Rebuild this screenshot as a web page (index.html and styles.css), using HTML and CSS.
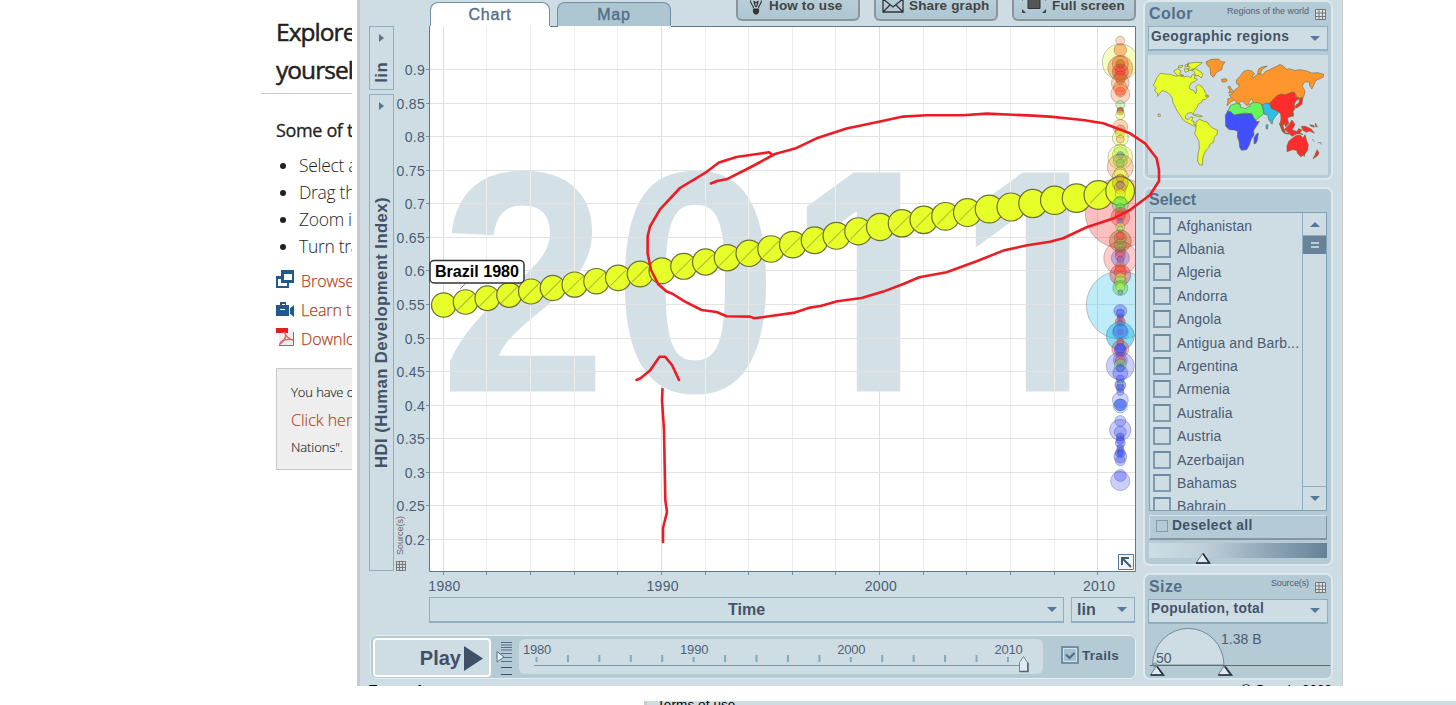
FILE: index.html
```html
<!DOCTYPE html>
<html lang="en">
<head>
<meta charset="utf-8">
<title>Explore the data yourself</title>
<link rel="stylesheet" href="styles.css">
</head>
<body>
<div class="page">
  <div class="top">
    <aside class="article">
      <h1>Explore the data<br>yourself</h1>
      <h2>Some of the things</h2>
      <ul class="tips">
        <li>Select a country</li>
        <li>Drag the slider</li>
        <li>Zoom in to see</li>
        <li>Turn trails on</li>
      </ul>
      <div class="links">
        <a><svg width="19" height="20" viewBox="0 0 19 20"><path fill="#22598c" d="M5 -1h13v13H5zM0 5h13v12H0z"/><path fill="#fff" d="M8 3h8v6H8z"/><path fill="#fff" d="M2 8h3v4h6v3H2z"/></svg>Browse data</a>
        <a><svg width="19" height="20" viewBox="0 0 19 20"><path fill="#22598c" d="M0 5h4V2h6v3h3v4l5-4v12l-5-4v3H0z"/><path fill="#fff" d="M6 4h3v1H6zM4 9h5v1H4zM13 7h1v7h-1z"/></svg>Learn to use</a>
        <a><svg width="19" height="20" viewBox="0 0 19 20"><path fill="#eee" d="M3 0h14v16H3z"/><path fill="none" stroke="#777" d="M17.500 3v13.500H3"/><path fill="#e02020" d="M0-1h12v5H0z"/><path fill="none" stroke="#e0686c" stroke-width="1.500" d="M8 3c3 3 2 7-4 12 1-4 8-6 13-4-5-1-7-4-9-8"/></svg>Download it</a>
      </div>
      <div class="note">
        <p>You have chosen</p>
        <p class="note-link">Click here to</p>
        <p>Nations".</p>
      </div>
    </aside>

    <main class="app">
      <div class="main">
        <div class="tabbar">
          <div class="tab tab-on">Chart</div>
          <div class="tab">Map</div>
          <div class="tools">
            <div class="tool t1"><svg width="14" height="18" viewBox="0 0 14 18" fill="none" stroke="#333" stroke-width="1.1"><path d="M4.500 11C4 8 1.500 7 1.500 3.500M12.500 3.500C12.500 7 9.500 8 9.500 11M5 5l1.500 5M9 5l-1.500 5M4.500 4l2.500 2 2.500-2"/><path fill="#333" d="M4.500 12h5v3l-1.500 2h-2l-1.500-2z"/></svg>How to use</div>
            <div class="tool t2"><svg width="22" height="15" viewBox="0 0 22 15" fill="none" stroke="#333" stroke-width="1.3"><path d="M1 1h20v13H1zM1 1l10 8 10-8M1 14l7-7M21 14l-7-7"/></svg>Share graph</div>
            <div class="tool t3"><svg width="24" height="17" viewBox="0 0 24 17"><path fill="#555" stroke="#333" d="M6 2.500h12v9H6z"/><path fill="#444" d="M0 0h4L0 4zM24 0h-4l4 4zM0 16h4l-4-4zM24 16h-4l4-4z"/></svg>Full screen</div>
          </div>
        </div>
        <div class="chart-row">
          <div class="axis-picks">
            <div class="vpick vpick-s"><svg width="5" height="8"><path d="M0 0l5 4-5 4z"/></svg><span>lin</span></div>
            <div class="vpick vpick-l"><svg width="5" height="8"><path d="M0 0l5 4-5 4z"/></svg><span>HDI (Human Development Index)</span></div>
          </div>
          <svg id="chart" class="chart" width="742" height="571" viewBox="394 26 742 571"></svg>
        </div>
        <div class="xpicks">
          <div class="pick xtime"><span>Time</span><i class="caret"></i></div>
          <div class="pick xlin"><span>lin</span><i class="caret"></i></div>
        </div>
        <div class="playbar">
          <div class="play"><span>Play</span><svg width="19" height="25"><path fill="#3f5068" d="M0 0l19 12.500L0 25z"/></svg></div>
          <svg class="speed" width="17" height="36" viewBox="496 641 17 36"><path stroke="#56708a" stroke-width="1.1" d="M501 642.500h11M501 645h11M501 647.500h11M501 650h11M501 653.500h11M501 657.500h11M501 661.500h11"/><path stroke="#3f5068" d="M501 667.500h11M501 674.500h11"/><path fill="#e8eff3" stroke="#56708a" d="M497 651.500l7 5.500-7 5z"/></svg>
          <svg id="timeline" class="timeline" width="524" height="35" viewBox="519 639 524 35"></svg>
          <div class="trails"><svg width="18" height="18"><path fill="#a5c1cf" stroke="#5f7e97" stroke-width="1.500" d="M1 1h16v16H1z"/><path fill="none" stroke="#d4e2e9" d="M2.500 2.500h13v13h-13z"/><path fill="none" stroke="#4d6b85" stroke-width="2" d="M5 8.500l3.500 3.500L13.500 7"/></svg>Trails</div>
        </div>
      </div>

      <div class="side">
        <section class="panel p-color">
          <header><b>Color</b><small>Regions of the world</small><svg class="grid-ic" width="11" height="11"><path d="M.5.5h10v10H.5zM4 .5v10M7.500.5v10M.5 4h10M.5 7.500h10"/></svg></header>
          <div class="pick wide"><span>Geographic regions</span><i class="caret"></i></div>
          <div class="mapbox"><svg width="180" height="120" viewBox="36 165 540 360" stroke="#6b6a3c" stroke-width="1.800" stroke-linejoin="round">
            <g fill="#e6ff29">
              <path transform="translate(15 0) scale(.93 1)" d="M52 232l10-12 18 2 14 1 19 6 8-3 18 5 10-3 12 5 5-10 8 2-2 10 10 2-8 8-10 2-8 12 2 8 14 5 4 10 4-10-3-12 8-6 10 4 8 10 4 10 9 12-8 8-10 2-1 6-12 6-5 12-8 8-4 12-4-6-12 1-8 8 0 9 8 3 8-8 8 1-5 10 8 3 0 9 10 2-10 3-12-7-16-7-10-9-8-12-8-10-6-12-7-12-3-16-9-12-12-7-10-3-7 5-10 12 2-8-8-5-3-8 6-3-10-9z"/>
              <path d="M113 213l12-7 10 7-4 9 12 4-18 2zM127 198l14-2-4 6-9 2zM147 195l12-4-3 8-9 2zM156 190l22-3 21 1-10 8-13 9-8 7-13-2 8-8-9-4zM166 207l14 0 14 8 7 9-6 10-8-8-8 2-4-12zM145 207l11-2 2 8-10 4zM173 345l12-1 14 5-10 2zM66 342l7 1 0 6-6 0zM208 286l9 0 0 5-8-1z"/>
              <path d="M180 366l10-8 12 5 12 3 6 9 10 9 15 7-2 12-8 9-2 14-11 7-4 10-10 10-4 10-4 13 0 10 0 9-9 0-6-11 1-20 4-20-1-20-6-11-7-12 4-15z"/>
            </g>
            <g fill="#ff962d">
              <path d="M211 185l15-7 22-1 8 8 11 1-8 12-1 10-16 9-10 15-8-8-2-19-10-12zM256 238l12-2 6 4-5 6-10 0zM365 222l2-14 11-7 16-3-15 10-7 14zM275 262l6-4 5 8 7 9-15 5 4-10z"/>
              <path transform="translate(26 0) scale(.9 1)" d="M277 309l0-12 12-4-7-8 12-5 8-12 9-4 5-10-9-2-2-12 12-10 12-15 14-5 14 3 10 9-8 5 2 7 10-8 14-4 10 1 8-9 10-4 20-8 19-9 14 8 5 7 12-2 15 5 22-2 20 4 17 6 20-1 20 5-2 8-15 7-10 4-7 15-6 10-8-12 2-9-18 0-8 12 10 15-5 17-10 12-14-3 0-14-18-3-20 5-18-2-9 5-12 10-6 15-10-4-15 7-10-6-16-1-10-3-6-13-9 12 2 8-10 1-8-9-7-4-8 5 1 8-9-7-9-9-9 4-8 7-8 6z"/>
            </g>
            <path fill="#65f560" d="M275 333l9-17 18-6 12 4-2 7 16 5 9-6 7-2 0-8 16-3 13 3 5 8 4 13 0 12-9 7-13 10-8-7-6-11-17-3-20 4-6 6-14-8z"/>
            <path fill="#4050ff" d="M268 346l7-13 9 2 10 11 10-3 20-2 23 0 6 12 10 12 7-1-9 15-8 12 1 14-8 12-7 20-7 12-16 2-5-10-2-17-5-14 1-16-10-4-15-1-11-10zM354 431l0-18 8-12 5-1-2 17-5 13z"/>
            <path fill="#2dbde8" d="M379 314l12-5 10 3 12 14 18 3-6 12-7 9-7 10-3 13-10-14-3-14-10-2zM390 375l6-1-1 13-5-1z"/>
            <path fill="#ff2c2c" d="M401 309l10-10 12-12 12-5 12 2 10-3 9-4 10 0 3 13 12 4-10 7-6 11 2 13-7 12 1 10-10 4-7 3 4 16-9 10-4-10-5 10 7 17-7-3-8-20 3-18-1-14-7-7-12-6-10-5zM479 316l10-8 4-14 7-2-2 20-12 10-7 2zM430 369l12 12 6 17 12 4-10 0-10-6zM446 388l14-16 8-12 9 14-9 15 15 6 5-9 10 4-7 9 10 4-18-2-15 8zM465 330l8 10-2 10-6-6zM496 379l12 0 18 8 9 13-14-7-10 4-10-6zM522 374l12 3 0 5-10-4zM538 369l6 12-6-2zM453 439l5-15 12-10 12-8 12 0 7 8 6-10 5 18 5 13-3 17-8 11-12 7-10-10-2-9-12-2-17 6zM501 457l5-1-1 14zM543 449l6 9-5 10-13 8 6-11zM528 417l7 8M545 428l10 0M554 427l3 7"/>
          </svg></div>
        </section>
        <section class="panel p-select">
          <header><b>Select</b></header>
          <div class="list">
            <div class="items">
              <label><i></i>Afghanistan</label><label><i></i>Albania</label><label><i></i>Algeria</label><label><i></i>Andorra</label><label><i></i>Angola</label><label><i></i>Antigua and Barb...</label><label><i></i>Argentina</label><label><i></i>Armenia</label><label><i></i>Australia</label><label><i></i>Austria</label><label><i></i>Azerbaijan</label><label><i></i>Bahamas</label><label><i></i>Bahrain</label>
            </div>
            <div class="scroll"><div class="sb"><i class="up"></i></div><div class="thumb"><i></i></div><div class="sb last"><i class="caret"></i></div></div>
          </div>
          <div class="desel"><i></i>Deselect all</div>
          <div class="fade"><svg width="16" height="12"><path fill="#dfe9ee" stroke="#6a7c8c" d="M1 11L7.500 1.500 14 11z"/><path fill="none" stroke="#1f2a3a" stroke-width="1.500" d="M8 1.500L14.500 11H1"/></svg></div>
        </section>
        <section class="panel p-size">
          <header><b>Size</b><small>Source(s)</small><svg class="grid-ic" width="11" height="11"><path d="M.5.5h10v10H.5zM4 .5v10M7.500.5v10M.5 4h10M.5 7.500h10"/></svg></header>
          <div class="pick wide"><span>Population, total</span><i class="caret"></i></div>
          <svg class="sizer" width="182" height="54" viewBox="1148 623 182 54"><path fill="#cedde4" stroke="#6f8ca3" d="M1152.500 664a35.700 36.500 0 0 1 71.500 0z"/><path stroke="#5f6a68" d="M1150 664.500h180"/><circle cx="1155" cy="664" r="2" fill="none" stroke="#6f8ca3"/><text x="1156" y="662">50</text><text x="1221" y="643">1.38 B</text><g fill="#dfe9ee" stroke="#6a7c8c"><path d="M1150.500 674l6-9 6 9z"/><path d="M1218 674l6-9 6 9z"/></g><path fill="none" stroke="#1f2a3a" stroke-width="1.500" d="M1157 665.500l6.500 8.500h-13M1225 665.500l6.500 8.500h-13"/></svg>
        </section>
      </div>
      <footer class="foot"><span>Terms of use</span><span>© Google 2009</span></footer>
    </main>
  </div>
  <div class="strip"><span>Terms of use</span></div>
  <svg class="ink" width="1456" height="705">
    <path d="M711 183.500L717 181 726.500 179.300 750 167.500 774 154.500M772.500 155L769 152.300 736.500 157 719 162.500 706 172.300 680 188 660 209.300 650 226.500 647.600 236.600V253.300L651 270 658.300 284.300 666.600 291.600 672 293.500 685 301.600 701.600 310 716.600 312 726.600 316.300 750 316.600 754.300 318.300 795 312.600 810 307.600 820.600 306 837.300 301.300 861.600 298 883.300 291.600 903.300 284 919.300 277.300 946.600 272.300 976.600 261.300 1003.300 250.600 1026 245.500 1050 241.700 1063.300 238.300 1086.600 227.300 1113.300 218.600 1130 210 1150 195 1159 181V170L1156.600 158.300 1145 143.300 1130 133.300 1103.300 123.300 1083 120 1050 116.600 1033 115.600 987 113.600 963 115.300H926.600L903 116.600 880 121.600 846.600 128.600 816.600 138.300 795 148.600 774 154.300"/>
    <path d="M636.500 380L640.500 378.300 650 370.600 659.500 356.700H665L672 365 679 380M662.500 389L662 400 664 430 665.300 500 667 512 663 528V542"/>
  </svg>
</div>
<script src="chart.js"></script>
</body>
</html>
```
FILE: styles.css
```css
* { box-sizing: border-box; }
body { margin: 0; background: #fff; font-family: "Liberation Sans", Arial, sans-serif; }
.page { position: relative; width: 1456px; height: 705px; overflow: hidden; }
.top { display: flex; height: 686px; gap: 5px; }

.article { width: 352px; height: 686px; overflow: hidden; padding-left: 276px; white-space: nowrap; font-family: "Open Sans", "Noto Sans", sans-serif; color: #231f20; }
.article h1 { margin: 0 0 0 -15px; padding: 13px 0 4px 15px; height: 94px; border-bottom: 1px solid #c8c8c8; font-size: 24.500px; line-height: 38px; font-weight: 400; letter-spacing: -.95px; -webkit-text-stroke: .5px #231f20; }
.article h2 { margin: 23px 0 0; font-size: 18px; line-height: 26px; font-weight: 400; letter-spacing: -.35px; -webkit-text-stroke: .3px #231f20; }
.tips { margin: 9px 0 0; padding: 0 0 0 23px; font-size: 17.500px; line-height: 27px; font-weight: 300; letter-spacing: -.3px; }
.links { display: grid; grid-auto-rows: 29px; margin-top: 6px; }
.links svg { overflow: visible; }
.links a { display: flex; align-items: center; gap: 6px; font-size: 16px; letter-spacing: -.05px; color: #b5451b; font-weight: 300; -webkit-text-stroke: .25px #b5451b; }
.note { width: 300px; height: 102px; margin-top: 15px; padding: 10px 14px; background: #eee; border: 1px solid #c8c8c8; font-size: 13px; line-height: 27.500px; letter-spacing: -.1px; }
.note p { margin: 0; font-weight: 300; -webkit-text-stroke: .15px currentColor; }
.note .note-link { font-size: 16px; color: #b5451b; letter-spacing: 0; }

.app { width: 986px; height: 686px; overflow: hidden; display: grid; grid-template-columns: 776px 190px; grid-template-rows: 682px 20px; column-gap: 7px; background: #cedde4; border-left: 3px solid #c9caca; border-right: 1px solid #c9caca; }
.tabbar { display: flex; height: 26px; padding-left: 70px; align-items: flex-start; }
.tab { width: 114px; height: 24px; margin: 2px 0 0 7px; border: 1px solid #6e90a8; border-bottom: 0; border-radius: 8px 8px 0 0; background: #aec6d2; color: #546f89; font-size: 16px; line-height: 23px; text-align: center; letter-spacing: .8px; -webkit-text-stroke: .4px #546f89; }
.tab-on { width: 120px; margin-left: 0; background: #fff; }
.tools { display: flex; gap: 14px; margin-left: 65px; }
.tool { display: flex; align-items: center; width: 124px; height: 33px; margin-top: -12px; padding: 4px 0 0 11px; gap: 7px; border: 2px solid #8b9599; border-top: 0; border-radius: 6px; background: linear-gradient(#bfd3dd, #adc6d2); color: #444; font-size: 13.500px; letter-spacing: .15px; font-weight: 700; white-space: nowrap; }
.t1 { gap: 6px; } .t2 { padding-left: 6px; gap: 5px; } .t3 { padding-left: 8px; gap: 6px; }

.chart-row { display: flex; height: 571px; padding-left: 9px; }
.axis-picks { width: 25px; display: flex; flex-direction: column; gap: 4px; }
.vpick { width: 25px; border: 1px solid #8dafc0; display: flex; flex-direction: column; align-items: center; justify-content: space-between; padding: 7px 0 6px; fill: #567692; }
.vpick-s { height: 64px; } .vpick-l { height: 477px; padding-bottom: 102px; }
.vpick span { writing-mode: vertical-rl; transform: rotate(180deg); font-size: 16.700px; line-height: 18px; font-weight: 700; letter-spacing: .42px; color: #43536a; white-space: nowrap; }
.chart { display: block; }
.axis { font-size: 14px; fill: #4a5d75; letter-spacing: .3px; }
.tiny { font-size: 9px; fill: #666; }
.year { font-weight: 700; font-size: 316px; fill: #d3e0e6; }
.year .slim { font-family: Inter, sans-serif; font-size: 301px; }
.tip { font-size: 16px; font-weight: 700; fill: #000; }

.pick { border: 1px solid #8dafc0; border-bottom-width: 2px; display: flex; align-items: center; justify-content: space-between; color: #43536a; font-weight: 700; background: #cedde4; }
.caret, .up { width: 0; height: 0; border: 5px solid transparent; border-top-color: #56789a; border-bottom: 0; }
.up { border: 5px solid transparent; border-bottom-color: #56789a; border-top: 0; }
.xpicks { display: flex; gap: 7px; padding-left: 69px; height: 26px; font-size: 16px; }
.xtime { width: 635px; padding: 0 6px 0 298px; }
.xlin { width: 64px; padding: 0 7px 0 5px; }
.playbar { display: flex; width: 766px; height: 44px; margin: 12px 0 0 10px; padding: 2px; border: 1px solid #e6eef2; border-radius: 6px; background: #b4cad5; }
.play { display: flex; align-items: center; justify-content: flex-end; width: 118px; height: 39px; padding: 1px 6px 0 0; gap: 3px; border: 2px solid #fff; border-radius: 4px; background: #cedde4; color: #3f5068; font-weight: 700; font-size: 20px; }
.speed { margin: 3px 6px 0 5px; }
.timeline { display: block; border-radius: 6px; background: #cedde4; margin-top: 1px; }
.timeline text { font-size: 13px; fill: #4f627a; letter-spacing: -.2px; }
.trails { display: flex; align-items: center; gap: 3px; height: 34px; margin-left: 18px; font-size: 13.500px; font-weight: 700; letter-spacing: .3px; color: #43536a; }

.side { display: flex; flex-direction: column; gap: 7px; padding-top: 0; }
.panel { width: 190px; border: 2px solid #dde8ed; border-radius: 7px; background: #b4cad5; padding: 0 4px; }
.p-color { height: 180px; padding: 1px 3px 0; } .p-select { height: 379px; padding-top: 1px; } .p-size { height: 107px; padding: 1px 3px 0; }
.panel header { display: flex; height: 23px; padding: 2px 0 0 1px; color: #546f89; font-size: 16px; line-height: 18px; align-items: flex-start; }
.panel header b { margin-right: auto; letter-spacing: .4px; font-size: 16px; }
.panel header small { font-size: 9px; line-height: 10px; color: #55606a; margin: 1px 7px 0 0; }
.grid-ic { fill: #dbe4e8; stroke: #777; margin: 4px 2px 0 0; }
.p-color header small { margin-right: 6px; }
.p-size header small { margin-top: 0; letter-spacing: -.1px; margin-right: 6px; }
.wide { width: 180px; height: 25px; padding: 0 7px 4px 2px; font-size: 13.800px; letter-spacing: .45px; white-space: nowrap; }
.wide .caret { margin-top: 4px; }
.p-size .wide { letter-spacing: .3px; padding-bottom: 5px; }
.mapbox { width: 180px; height: 120px; margin-top: 4px; background: #cedde4; }
.mapbox svg { display: block; }
.panel.p-select header { height: 22px; padding: 1px 0 0; }
.p-select header b { letter-spacing: 0; }
.list { display: flex; width: 178px; height: 299px; border: 1px solid #7f9fb3; background: #cedde4; overflow: hidden; }
.items { width: 153px; padding-top: 1px; }
.items label { display: flex; align-items: center; height: 23.400px; gap: 6px; padding-left: 3px; font-size: 14px; color: #4c5b72; letter-spacing: .12px; white-space: nowrap; }
.items i { width: 18px; height: 18px; border: 2px solid #7e9ab0; border-top-color: #6b8aa2; flex: none; }
.scroll { width: 24px; display: flex; flex-direction: column; border-left: 1px solid #8dafc0; }
.sb { height: 23px; display: flex; align-items: center; justify-content: center; border-bottom: 1px solid #8dafc0; }
.sb.last { margin-top: auto; height: 24px; border-top: 1px solid #8dafc0; border-bottom: 0; }
.thumb { height: 18px; background: #688299; display: flex; align-items: center; justify-content: center; }
.thumb i { width: 8px; height: 6px; border-top: 2px solid #b9ccd8; border-bottom: 2px solid #b9ccd8; }
.desel { display: flex; align-items: center; gap: 4px; width: 178px; height: 25px; margin-top: 4px; padding: 0 0 3px 6px; border: 1px solid #d4e2e9; border-right-color: #8596a2; border-bottom: 2px solid #8596a2; font-size: 13.800px; letter-spacing: .4px; font-weight: 700; color: #43536a; }
.desel i { width: 12px; height: 12px; border: 1px solid #7e9ab0; }
.fade { width: 178px; height: 15px; margin-top: 3px; padding: 7px 0 0 46px; background: linear-gradient(90deg, #cedde4, #bfd0da 30%, #658198); }
.sizer { display: block; }
.sizer text { font-size: 14px; fill: #4c5b72; }
.foot { grid-column: 1 / 3; display: flex; justify-content: space-between; padding: 0 0 0 9px; width: 972px; font-size: 13.500px; line-height: 16px; color: #000; }
.strip { margin: 15px 0 0 644px; height: 4px; overflow: hidden; background: #cedde4; border-left: 3px solid #c9caca; padding-left: 10px; font-size: 13.500px; line-height: 7px; letter-spacing: .1px; }
.ink { position: absolute; left: 0; top: 0; pointer-events: none; fill: none; stroke: #ed1c24; stroke-width: 2.600; stroke-linecap: round; stroke-linejoin: round; }
```
FILE: chart.js
```js
const NS = 'http://www.w3.org/2000/svg';
function add(parent, tag, attrs, text) {
  const el = document.createElementNS(NS, tag);
  for (const k in attrs) el.setAttribute(k, attrs[k]);
  if (text !== undefined) el.textContent = text;
  parent.appendChild(el);
  return el;
}

const chart = document.getElementById('chart');
const xOf = year => 443.7 + (year - 1980) * 21.82;
const yOf = v => 69 + (0.9 - v) * 671.4;

// Plot background and year watermark
add(chart, 'rect', { x: 430, y: 26, width: 705, height: 545, fill: '#fff' });
const mark = add(chart, 'g', { class: 'year' });
[['2', 439.5, 0.955], ['0', 613, 0.94]].forEach(([d, x, s]) =>
  add(mark, 'text', { transform: `translate(${x} 391.5) scale(${s} 1)` }, d));
[['1', 793.5], ['1', 962.5]].forEach(([d, x]) =>
  add(mark, 'text', { class: 'slim', transform: `translate(${x} 391.5) scale(.97 1)` }, d));

// Grid lines and ticks
for (let year = 1980; year <= 2010; year += 2) {
  const x = Math.round(xOf(year)) - 0.5;
  add(chart, 'path', { d: `M${x} 26V571`, stroke: year % 10 ? '#ededed' : '#dedede' });
  add(chart, 'path', { d: `M${x} 571v4`, stroke: '#7891a5' });
}
for (let i = 4; i <= 18; i++) {
  const v = i * 0.05;
  const y = Math.round(yOf(v)) + 0.5;
  add(chart, 'path', { d: `M430 ${y}H1135`, stroke: '#e2e2e2' });
  add(chart, 'path', { d: `M426 ${y}h4`, stroke: '#7891a5' });
  add(chart, 'text', { class: 'axis', x: 425, y: y + 5, 'text-anchor': 'end' }, String(Math.round(v * 100) / 100));
}
[1980, 1990, 2000, 2010].forEach(year =>
  add(chart, 'text', { class: 'axis', x: xOf(year) + 0.8, y: 590.5, 'text-anchor': 'middle' }, year));

const clip = add(add(chart, 'defs', {}), 'clipPath', { id: 'plot' });
add(clip, 'rect', { x: 430, y: 27, width: 705, height: 544 });
const dots = add(chart, 'g', { 'clip-path': 'url(#plot)' });

// Country bubbles: [y, radius, colour, opacity]
const R = '#ff2c2c', O = '#ff7a2d', Y = '#e6ff29', G = '#50e850', B = '#4050ff', C = '#2dbde8', D = '#b06a10';
const bubble = ([y, r, fill, o]) => add(dots, 'circle', {
  cx: 1120.3, cy: y, r, fill, 'fill-opacity': o, stroke: '#444', 'stroke-opacity': 0.3
});
[[213, 35, R, .3], [305, 34, C, .3], [62, 18, Y, .3], [40.700, 4.500, O, .3], [50, 6.300, O, .5], [68, 12.500, O, .45],
 [64, 8, O, .5], [64, 4.500, D, .5], [72, 8, R, .4], [71, 5, R, .4], [77, 6, R, .3], [80, 4.500, D, .5], [83, 9, O, .35], [88, 7, O, .35],
 [92, 5, R, .45], [94, 9.500, O, .3], [105, 4.500, G, .3], [110, 3, R, .5], [111.500, 3.500, D, .5], [115, 4.500, Y, .4],
 [127, 7.500, O, .35], [130, 5, D, .3], [133, 5, Y, .4], [138, 8, Y, .35], [139, 4, O, .3], [150, 6, Y, .3], [155, 8, G, .35],
 [157, 12.300, Y, .35], [155, 3.500, B, .3], [161, 7, G, .4], [163, 4, G, .5], [167, 13, O, .3], [173, 6, Y, .4], [177, 8, Y, .35]
].forEach(bubble);

// Brazil trail, one value per year from 1980
const trail = [305, 302, 298.300, 295, 291.500, 288, 284.600, 281.200, 277.800, 274, 270.700, 266.300, 262, 257.700, 253.300, 249, 244.600, 240.300,
  235.800, 231.300, 227, 223.300, 219.800, 216.300, 212.600, 209, 207, 203.500, 200.300, 198.200, 195, 191];
trail.forEach((y, i) => {
  const x = xOf(1980 + i);
  add(dots, 'circle', { cx: x, cy: y, r: 12.200 + i * 0.07, fill: Y, stroke: '#6c7034', 'stroke-width': 1.200 });
  if ((i % 10 && i < 25) || i === 30)
    add(dots, 'path', { d: `M${x - 8} ${y + 8}L${x + 8} ${y - 8}`, stroke: '#b4bf38', 'stroke-width': 1.100 });
});

[[178, 4, O, .3], [183, 8, D, .25], [185, 4, B, .4], [188, 6, O, .3], [194, 5, Y, .4], [202, 6, G, .35], [205, 8, G, .4], [208, 4.500, G, .4],
 [214, 5, O, .35], [217, 9.500, R, .35], [216, 5, R, .3], [221, 3, B, .35], [227, 4.500, Y, .4], [229, 3, G, .4], [236, 4, R, .3],
 [241, 11, D, .4], [238, 6, R, .3], [245, 6, G, .35], [248, 4.500, G, .5], [252, 5, O, .4], [258, 16.500, R, .25], [258, 9, B, .3], [256, 5, R, .35], [260, 3.500, B, .3],
 [267, 5, O, .5], [275, 10.500, R, .4], [272, 6, R, .3], [278, 5, Y, .5], [282, 6, G, .3], [288, 7.500, G, .5], [287, 4.500, Y, .4], [292, 2.500, B, .3],
 [311, 6.500, B, .4], [313, 4, B, .5], [317, 3, B, .5], [322, 5, R, .5], [323, 3, B, .5], [332, 8, B, .35], [332, 3, R, .5], [336, 14, C, .55], [331, 7, B, .3],
 [342, 3.500, R, .4], [349, 8.500, R, .35], [350, 6, B, .6], [348, 5, B, .5], [360, 7, B, .3], [366, 14, B, .28], [360, 5, R, .4], [365, 6, G, .4], [368, 4, B, .4],
 [373, 7.500, B, .35], [379, 4, B, .4], [385, 5.500, B, .5], [384, 3, G, .3], [388, 4, B, .5], [392, 3.500, B, .3], [400, 8, B, .25], [406, 7, C, .3], [405, 6, B, .6],
 [421, 5.500, B, .3], [430, 10.700, B, .3], [432, 6, B, .3], [437, 4, B, .5], [440, 4, B, .4], [443, 5, B, .45], [448, 3.500, B, .5], [452.700, 5, B, .5], [453, 3, B, .6],
 [456.500, 6.500, B, .4], [461, 5, B, .35], [475.500, 6, B, .35], [481, 9.700, B, .28]
].forEach(bubble);

// Plot frame
add(chart, 'path', { d: 'M671 26.500H1135.500V571.500H429.500V26M550 26.500h8', fill: 'none', stroke: '#5a7a94' });
add(chart, 'path', { d: 'M460 289l6-6', stroke: '#999' });
add(chart, 'rect', { x: 430, y: 260.500, width: 94, height: 22.500, rx: 4, fill: '#fff', stroke: '#333', 'stroke-width': 1.500 });
add(chart, 'text', { class: 'tip', x: 435, y: 277, textLength: 84, lengthAdjust: 'spacingAndGlyphs' }, 'Brazil 1980');
add(chart, 'path', { d: 'M1118.500 554.500h15v15h-15z', fill: '#eef4f7', stroke: '#56789a' });
add(chart, 'path', { d: 'M1122 565v-7h7M1122 558l9 9', fill: 'none', stroke: '#3f5a75', 'stroke-width': 2 });

// Source note beside the vertical axis
add(chart, 'text', { class: 'tiny', transform: 'translate(402.5 555) rotate(-90)' }, 'Source(s)');
add(chart, 'path', { d: 'M396.500 561.500h9v9h-9zM399.500 561.500v9M402.500 561.500v9M396.500 564.500h9M396.500 567.500h9', fill: 'none', stroke: '#777' });

// Play timeline
const line = document.getElementById('timeline');
for (let i = 0; i <= 15; i++) {
  const x = 536.500 + i * 31.430;
  const major = i % 5 === 0;
  add(line, 'path', { d: `M${x} ${major ? 657 : 655}V662`, stroke: '#84a8bc', 'stroke-width': 2 });
  if (major) add(line, 'text', { x: x + 0.5, y: 654, 'text-anchor': 'middle' }, 1980 + i * 2);
}
add(line, 'path', { d: 'M534 665.500H1020', stroke: '#7b97a9' });
add(line, 'path', { d: 'M1019.500 671.500v-9l4-6 4 6v9z', fill: '#dfe9ee', stroke: '#7a8797' });
add(line, 'path', { d: 'M1019.500 671.500h8.500v-9', fill: 'none', stroke: '#56647a', 'stroke-width': 1.500 });
```
